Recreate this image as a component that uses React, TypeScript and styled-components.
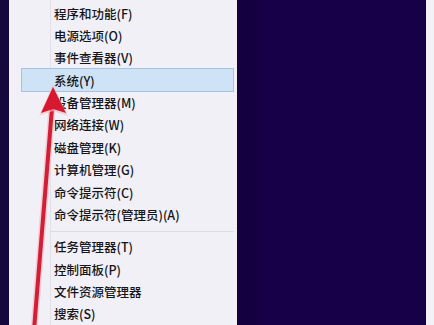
import React from 'react';
import styled, {createGlobalStyle} from "styled-components";

const GlobalStyle = createGlobalStyle`
  html, body {
    margin: 0;
    padding: 0;
    overflow: hidden;
  }
  body {
    font-family: "Noto Sans CJK SC", "Noto Sans", sans-serif;
  }
`

const groups: string[][] = [
    [
        "程序和功能(F)",
        "电源选项(O)",
        "事件查看器(V)",
        "系统(Y)",
        "设备管理器(M)",
        "网络连接(W)",
        "磁盘管理(K)",
        "计算机管理(G)",
        "命令提示符(C)",
        "命令提示符(管理员)(A)",
    ],
    [
        "任务管理器(T)",
        "控制面板(P)",
        "文件资源管理器",
        "搜索(S)",
    ],
];

const Arrow = () => (
    <StyledArrow viewBox="0 0 434 325" width="434" height="325">
        <line x1="52" y1="108" x2="34" y2="330" stroke="#f4b9c2" strokeWidth="7" strokeLinecap="round" opacity="0.6"/>
        <line x1="52" y1="108" x2="34" y2="330" stroke="#d21f36" strokeWidth="4"/>
        <polygon points="53,87 66,114 53,110 41,114" fill="#f4b9c2" opacity="0.6" stroke="#f4b9c2" strokeWidth="2"/>
        <polygon points="53,87 66,113 53,109 41,113" fill="#d6192f"/>
    </StyledArrow>
);

export default function App() {
    return (
        <>
            <GlobalStyle/>
            <StyledScreen>
                <StyledLeftEdge/>
                <StyledMenu>
                    {groups.map((items, gi) => (
                        <React.Fragment key={gi}>
                            {gi > 0 && <StyledSeparator/>}
                            {items.map(label => (
                                <StyledMenuItem key={label} $active={label === "系统(Y)"}>
                                    {label}
                                </StyledMenuItem>
                            ))}
                        </React.Fragment>
                    ))}
                </StyledMenu>
                <StyledDesktop/>
                <StyledRightEdge/>
                <Arrow/>
            </StyledScreen>
        </>
    );
}

const StyledScreen = styled.div`
  position: relative;
  width: 434px;
  height: 325px;
  display: flex;
  overflow: hidden;
  background-color: #170047;
`
const StyledLeftEdge = styled.div`
  width: 9px;
  background-color: #16083d;
`
const StyledMenu = styled.div`
  width: 228px;
  display: flex;
  flex-direction: column;
  padding-top: 2px;
  box-sizing: border-box;
  background-color: #f1f0f6;
  background-image: linear-gradient(to right, transparent 41px, #e2e0ea 41px, #e2e0ea 42px, transparent 42px);
`
interface MenuItemProps {
    $active?: boolean
}
const StyledMenuItem = styled.div<MenuItemProps>`
  height: 22.5px;
  margin: 0 3px 0 12px;
  padding-left: 32px;
  display: flex;
  align-items: center;
  box-sizing: border-box;
  font-size: 12.5px;
  font-weight: 500;
  color: #15151a;
  white-space: nowrap;
  border: 1px solid ${props => props.$active ? "#a7c3de" : "transparent"};
  background-color: ${props => props.$active ? "#cfe3f6" : "transparent"};
  ${props => props.$active && "height: 24px; margin-top: -0.75px; margin-bottom: -0.75px;"}
`
const StyledSeparator = styled.div`
  height: 10px;
  margin-left: 41px;
  margin-right: 3px;
  background-image: linear-gradient(to bottom, transparent 5px, #dcdbe2 5px, #dcdbe2 6px, transparent 6px);
`
const StyledDesktop = styled.div`
  flex: 1;
  background-color: #170047;
  background-image: linear-gradient(to right, #140040 0, #140040 21px, transparent 21px);
`
const StyledRightEdge = styled.div`
  width: 8px;
  border-left: 1px solid #0d0020;
  background-color: #f3f1f6;
`
const StyledArrow = styled.svg`
  position: absolute;
  left: 0;
  top: 0;
  pointer-events: none;
`
